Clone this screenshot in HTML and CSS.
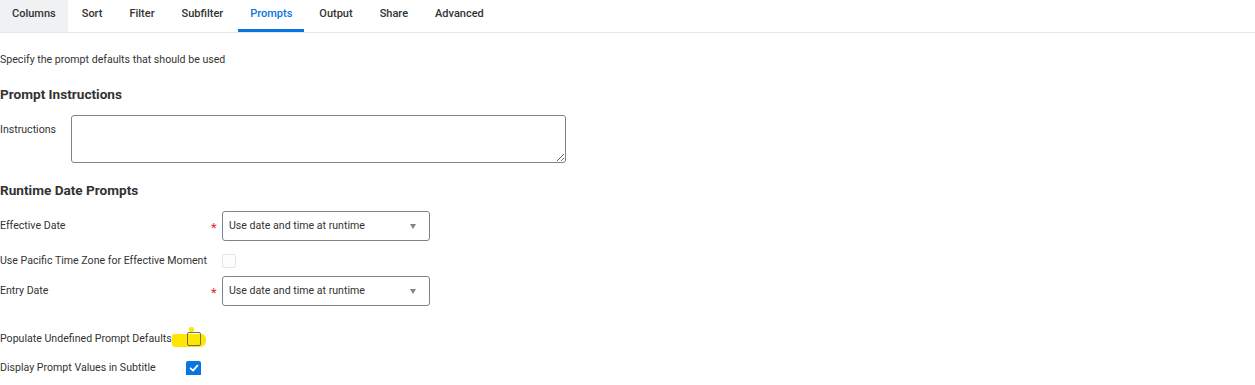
FILE: index.html
```html
<!DOCTYPE html>
<html>
<head>
<meta charset="utf-8">
<link rel="stylesheet" href="styles.css">
</head>
<body>
<nav class="tabs">
  <div class="tab tab-first">Columns</div>
  <div class="tab">Sort</div>
  <div class="tab">Filter</div>
  <div class="tab">Subfilter</div>
  <div class="tab active">Prompts</div>
  <div class="tab">Output</div>
  <div class="tab">Share</div>
  <div class="tab">Advanced</div>
</nav>
<main class="content">
  <p class="intro">Specify the prompt defaults that should be used</p>
  <h2 class="heading h-instr">Prompt Instructions</h2>
  <div class="instr-row">
    <label class="lbl instr-lbl">Instructions</label>
    <textarea class="textarea"></textarea>
  </div>
  <h2 class="heading h-runtime">Runtime Date Prompts</h2>
  <div class="form-grid">
    <label class="lbl">Effective Date</label>
    <span class="req">*</span>
    <div class="select"><span>Use date and time at runtime</span><span class="caret"></span></div>

    <label class="lbl mid">Use Pacific Time Zone for Effective Moment</label>
    <span class="mid"></span>
    <div class="cb-cell mid"><span class="cb cb-disabled"></span></div>

    <label class="lbl">Entry Date</label>
    <span class="req">*</span>
    <div class="select"><span>Use date and time at runtime</span><span class="caret"></span></div>
  </div>
  <div class="check-grid">
    <label class="lbl">Populate Undefined Prompt Defaults</label>
    <div class="cb-cell"><span class="highlight"></span><span class="cb cb-empty"></span></div>
    <label class="lbl">Display Prompt Values in Subtitle</label>
    <div class="cb-cell"><span class="cb cb-checked"><svg viewBox="0 0 14 14" width="14" height="14"><path d="M3.6 7.3 L6 9.6 L10.4 4.6" fill="none" stroke="#fff" stroke-width="1.8" stroke-linecap="round" stroke-linejoin="round"/></svg></span></div>
  </div>
</main>
</body>
</html>
```
FILE: styles.css
```css
* { box-sizing: border-box; }
body {
  margin: 0;
  font-family: Roboto, "Liberation Sans", Arial, sans-serif;
  color: #333;
  background: #fff;
}
.tabs {
  display: flex;
  gap: 3px;
  height: 33px;
  border-bottom: 1px solid #e6e8ea;
}
.tab {
  padding: 0 12px;
  height: 32px;
  line-height: 27px;
  font-size: 11px;
  font-weight: 500;
  color: #333;
  border-bottom: 3px solid transparent;
}
.tab:nth-child(2) { margin-left: -1px; }
.tab-first {
  background: #f0f1f2;
  border-bottom-color: #f0f1f2;
}
.tab.active {
  color: #0875e1;
  border-bottom-color: #0875e1;
}
.intro {
  margin: 0;
  padding-top: 20px;
  font-size: 10.6px;
  line-height: 14px;
  color: #333;
}
.heading {
  margin: 0;
  font-size: 13.6px;
  font-weight: 700;
  line-height: 18px;
  color: #333;
}
.h-instr { margin-top: 18px; }
.instr-row {
  display: flex;
  align-items: flex-start;
  margin-top: 12px;
}
.lbl {
  font-size: 10.6px;
  line-height: 14px;
  color: #333;
  white-space: nowrap;
}
.instr-lbl {
  width: 71px;
  padding-top: 8px;
}
.textarea {
  width: 495px;
  height: 48px;
  border: 1px solid #7b858f;
  border-radius: 3px;
  margin: 0;
  padding: 4px;
  resize: vertical;
  font-family: inherit;
}
.h-runtime { margin-top: 18px; }
.form-grid {
  display: grid;
  grid-template-columns: 210px 12px 208px;
  grid-template-rows: 30px 35px 30px;
  align-items: center;
  margin-top: 12px;
}
.form-grid .mid {
  align-self: start;
  margin-top: 13px;
}
.req {
  color: #de2f2f;
  font-size: 13px;
  line-height: 14px;
  padding-left: 1px;
  padding-top: 3px;
}
.select {
  height: 30px;
  border: 1px solid #7b858f;
  border-radius: 3px;
  display: flex;
  align-items: center;
  justify-content: space-between;
  padding: 0 13px 1px 6px;
  font-size: 10.6px;
  color: #333;
}
.caret {
  width: 0;
  height: 0;
  border-left: 3.5px solid transparent;
  border-right: 3.5px solid transparent;
  border-top: 5px solid #7b838b;
  margin-top: 1px;
}
.cb-cell {
  position: relative;
  height: 14px;
  display: flex;
  align-items: center;
}
.cb {
  position: relative;
  display: inline-block;
  width: 14px;
  height: 14px;
  border-radius: 2px;
}
.cb-disabled {
  border: 1px solid #e2e5e8;
  background: #fcfdfd;
}
.cb-empty {
  border: 1px solid #6d6f4a;
}
.cb-checked {
  width: 15px;
  height: 15px;
  background: #0875e1;
  margin-left: -1px;
}
.cb-checked svg { display: block; margin: 0.5px; }
.check-grid {
  display: grid;
  grid-template-columns: 187px 20px;
  grid-template-rows: 14px 14px;
  row-gap: 15px;
  align-items: center;
  margin-top: 26px;
}
.highlight {
  position: absolute;
  left: -15px;
  top: 2px;
  width: 34px;
  height: 13px;
  background: #ffe600;
  border-radius: 2px 5px 6px 3px;
}
.highlight::after {
  content: "";
  position: absolute;
  left: 17px;
  top: -7px;
  width: 5px;
  height: 5px;
  background: #ffe600;
  border-radius: 2px;
}
```
